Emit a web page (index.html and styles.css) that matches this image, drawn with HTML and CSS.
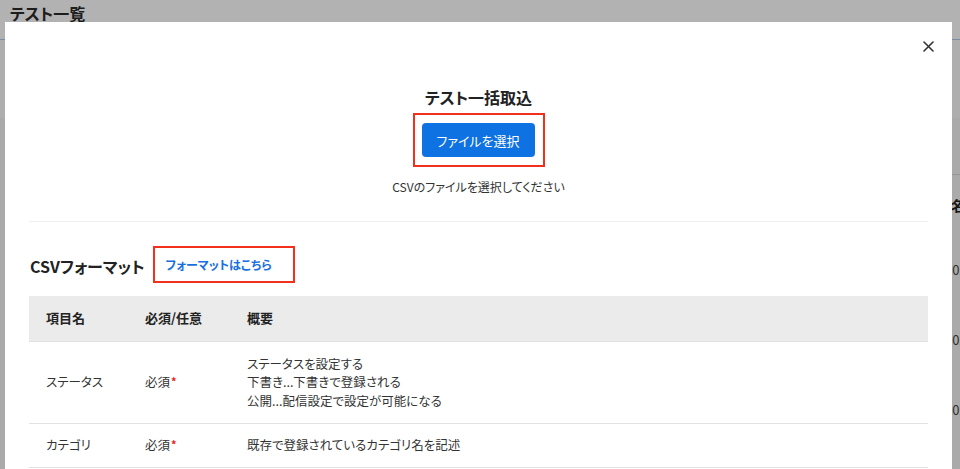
FILE: index.html
```html
<!DOCTYPE html>
<html lang="ja">
<head>
<meta charset="utf-8">
<title>テスト一覧</title>
<link rel="stylesheet" href="styles.css">
</head>
<body>
<div class="page">
  <header class="page-header"><h1 class="page-title">テスト一覧</h1></header>
  <div class="page-band"></div>
  <div class="page-list">
    <div class="page-list-head">名前</div>
    <div class="page-list-cell">2024</div>
    <div class="page-list-cell">2024</div>
    <div class="page-list-cell">2024</div>
  </div>
</div>

<div class="overlay">
  <div class="modal">
    <button class="modal-close" aria-label="閉じる">
      <svg width="11" height="11" viewBox="0 0 11 11"><path d="M1 1L10 10M10 1L1 10" stroke="#333" stroke-width="1.6" stroke-linecap="round"/></svg>
    </button>

    <section class="upload">
      <h2 class="upload-title">テスト一括取込</h2>
      <div class="highlight highlight-button">
        <button class="btn-primary">ファイルを選択</button>
      </div>
      <p class="upload-note">CSVのファイルを選択してください</p>
    </section>

    <section class="format">
      <div class="format-head">
        <h3 class="format-title">CSVフォーマット</h3>
        <div class="highlight highlight-link"><a class="format-link" href="#">フォーマットはこちら</a></div>
      </div>

      <div class="table">
        <div class="row row-head">
          <div class="cell c1">項目名</div>
          <div class="cell c2">必須/任意</div>
          <div class="cell c3">概要</div>
        </div>
        <div class="row">
          <div class="cell c1">ステータス</div>
          <div class="cell c2">必須<span class="req">*</span></div>
          <div class="cell c3">ステータスを設定する<br>下書き...下書きで登録される<br>公開...配信設定で設定が可能になる</div>
        </div>
        <div class="row">
          <div class="cell c1">カテゴリ</div>
          <div class="cell c2">必須<span class="req">*</span></div>
          <div class="cell c3">既存で登録されているカテゴリ名を記述</div>
        </div>
      </div>
    </section>
  </div>
</div>
</body>
</html>
```

FILE: styles.css
```css
html, body {
  margin: 0;
  padding: 0;
  height: 100%;
  overflow: hidden;
}
body {
  font-family: "Noto Sans CJK JP", "Noto Sans", sans-serif;
  font-feature-settings: "palt";
  color: #333;
  background: #f4f4f4;
}

/* background page */
.page {
  width: 960px;
}
.page-header {
  height: 40px;
  box-sizing: border-box;
  background: #fff;
  border-bottom: 1px solid #b3c8ef;
  padding: 2px 10px 0;
}
.page-title {
  margin: 0;
  font-size: 16px;
  font-weight: 700;
  color: #2a2a2a;
  line-height: 22px;
}
.page-band {
  height: 78px;
  background: #fafafa;
}
.page-list {
  margin-left: 951px;
  width: 120px;
  display: flex;
  flex-direction: column;
  border-top: 1px solid #d8d8d8;
  margin-top: 56px;
  white-space: nowrap;
}
.page-list-head {
  height: 60px;
  line-height: 60px;
  font-weight: 700;
  font-size: 14px;
  color: #222;
}
.page-list-cell {
  height: 70px;
  line-height: 70px;
  font-size: 13px;
  color: #444;
  margin-left: -6px;
}
.page-list-cell:first-of-type { height: 60px; }

/* overlay + modal */
.overlay {
  position: fixed;
  inset: 0;
  background: rgba(0, 0, 0, 0.3);
}
.modal {
  position: relative;
  margin: 22px 0 0 5px;
  width: 947px;
  height: 600px;
  background: #fff;
  box-sizing: border-box;
  padding: 0 24px;
}
.modal-close {
  position: absolute;
  top: 19px;
  right: 18px;
  width: 11px;
  height: 11px;
  padding: 0;
  border: 0;
  background: none;
  display: flex;
}

.upload {
  display: flex;
  flex-direction: column;
  align-items: center;
  padding-top: 63px;
  padding-bottom: 25px;
  border-bottom: 1px solid #efefef;
}
.upload-title {
  margin: 0;
  font-size: 16px;
  font-weight: 700;
  line-height: 24px;
  color: #222;
}
.highlight {
  border: 2px solid #f2301b;
}
.highlight-button {
  margin-top: 4px;
  padding: 8px 8px 8px 7px;
  display: flex;
}
.btn-primary {
  width: 113px;
  height: 34px;
  border: 0;
  border-radius: 4px;
  background: #0f72e3;
  color: #fff;
  font-family: inherit;
  font-feature-settings: "palt";
  font-size: 13px;
  padding: 0;
}
.upload-note {
  margin: 11px 0 0;
  font-size: 12px;
  line-height: 18px;
  color: #333;
}

.format {
  padding-top: 24px;
}
.format-head {
  display: flex;
  align-items: center;
  gap: 8px;
  padding-left: 1px;
}
.format-title {
  margin: 0;
  font-size: 16px;
  font-weight: 700;
  line-height: 24px;
  color: #222;
  position: relative;
  top: 1px;
}
.highlight-link {
  height: 37px;
  box-sizing: border-box;
  display: flex;
  align-items: center;
  padding: 1px 21px 0 11px;
}
.format-link {
  color: #1a6fe0;
  font-weight: 700;
  font-size: 12px;
  text-decoration: none;
  line-height: 18px;
}

.table {
  margin-top: 13px;
  font-size: 12.5px;
  color: #333;
}
.row {
  display: grid;
  grid-template-columns: 116px 102px 1fr;
  border-bottom: 1px solid #e2e2e2;
  align-items: center;
}
.row-head {
  background: #ebebeb;
  height: 46px;
  box-sizing: border-box;
  font-weight: 700;
  font-size: 13px;
  color: #222;
}
.cell {
  line-height: 18.5px;
}
.row:not(.row-head) .cell {
  padding: 12.5px 0 12.5px;
}
.c1 { padding-left: 17px !important; }
.req {
  color: #e8231a;
  font-size: 11px;
  font-weight: 700;
  vertical-align: top;
  position: relative;
  top: -1px;
  margin-left: 1px;
}
```
